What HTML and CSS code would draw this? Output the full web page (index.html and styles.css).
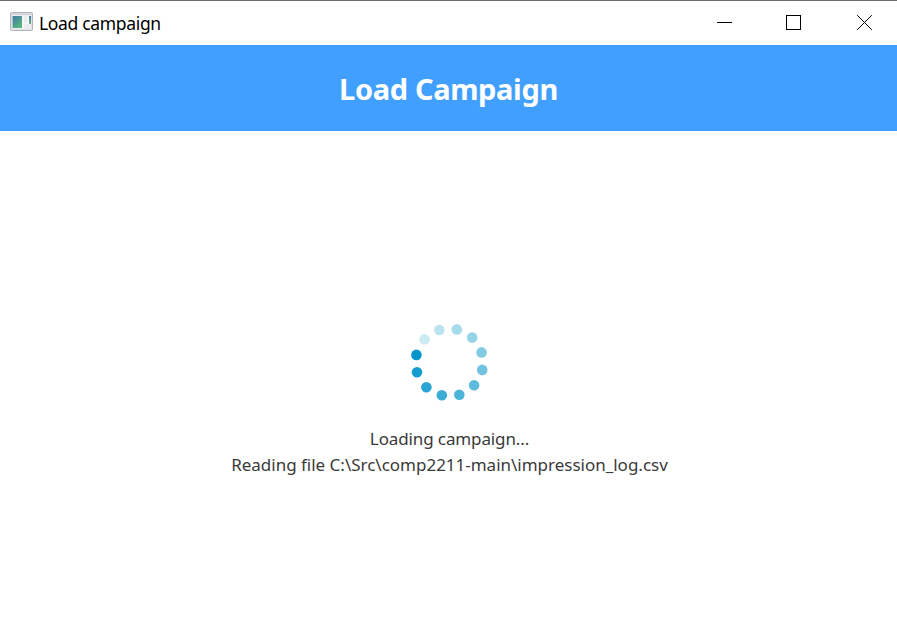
FILE: index.html
```html
<!DOCTYPE html>
<html lang="en">
<head>
<meta charset="utf-8">
<title>Load campaign</title>
<link rel="stylesheet" href="styles.css">
</head>
<body>
<div class="window">
  <div class="titlebar">
    <svg class="app-icon" width="24" height="20" viewBox="0 0 24 20">
      <defs>
        <linearGradient id="pane" x1="0" y1="0" x2=".7" y2="1"><stop offset="0" stop-color="#4279a6"/><stop offset="1" stop-color="#58b77f"/></linearGradient>
        <linearGradient id="side" x1="0" y1="0" x2="0" y2="1"><stop offset="0" stop-color="#4279b0"/><stop offset="1" stop-color="#67b98c"/></linearGradient>
      </defs>
      <rect x=".5" y=".5" width="22" height="18" rx="1" fill="#dfe2e5" stroke="#b2b6ba"/>
      <path d="M1 2h21" stroke="#d2d6dc" stroke-width="2"/>
      <path d="M2 3.5h19v13H2z" fill="#fafafa"/>
      <rect x="2.500" y="4" width="9.500" height="12" fill="url(#pane)"/>
      <rect x="13.500" y="4" width="4" height="7" fill="#ededed"/>
      <rect x="13.500" y="12" width="7" height="4" fill="#ededed"/>
      <rect x="19" y="4" width="2" height="8" fill="url(#side)"/>
    </svg>
    <span class="title">Load campaign</span>
    <svg class="controls" width="157" height="16" viewBox="0 0 157 16" fill="none" stroke="#000">
      <path d="M0 7.500h15"/>
      <rect x="69.500" y=".5" width="14" height="14"/>
      <path d="M140.200 .2l14.600 14.600M154.800 .2l-14.600 14.600"/>
    </svg>
  </div>
  <header class="banner"><h1 class="heading">Load Campaign</h1></header>
  <main class="content">
    <svg class="spinner" width="80" height="80" viewBox="409 322 80 80">
      <circle cx="424.500" cy="339.300" r="5.300" fill="#cbeaf4"/>
      <circle cx="439.300" cy="330" r="5.300" fill="#b9e3ef"/>
      <circle cx="456.800" cy="329.400" r="5.300" fill="#a7dbeb"/>
      <circle cx="472.200" cy="337.600" r="5.300" fill="#95d3e7"/>
      <circle cx="481.600" cy="352.400" r="5.300" fill="#83cbe3"/>
      <circle cx="482.200" cy="369.900" r="5.300" fill="#71c3df"/>
      <circle cx="474.100" cy="385.300" r="5.300" fill="#5fbbdc"/>
      <circle cx="459.300" cy="394.700" r="5.300" fill="#4cb4d9"/>
      <circle cx="441.800" cy="395.300" r="5.300" fill="#3aacd6"/>
      <circle cx="426.400" cy="387.200" r="5.300" fill="#28a5d2"/>
      <circle cx="417" cy="372.300" r="5.300" fill="#169dcf"/>
      <circle cx="416.400" cy="354.900" r="5.300" fill="#0496cb"/>
    </svg>
    <p class="status">Loading campaign...</p>
    <p class="status detail">Reading file C:\Src\comp2211-main\impression_log.csv</p>
  </main>
</div>
</body>
</html>
```

FILE: styles.css
```css
body {
  margin: 0;
  font-family: "Noto Sans", sans-serif;
  background: #fff;
}
.window {
  height: 644px;
  box-sizing: border-box;
  border-top: 1px solid #6b6b6b;
  display: flex;
  flex-direction: column;
  overflow: hidden;
}
.titlebar {
  height: 44px;
  display: flex;
  align-items: center;
  padding: 0 23px 0 10px;
}
.app-icon {
  margin-top: -2px;
  margin-right: 4px;
}
.title {
  flex: 1;
  font-size: 17.5px;
  line-height: 24px;
  letter-spacing: -0.33px;
  color: #000;
  padding-left: 1px;
}
.banner {
  height: 86px;
  background: #409fff;
  display: flex;
  justify-content: center;
  align-items: center;
}
.heading {
  margin: 0;
  padding-top: 2px;
  font-size: 29px;
  line-height: 40px;
  letter-spacing: -0.35px;
  font-weight: 700;
  color: #fff;
}
.content {
  flex: 1;
  display: flex;
  flex-direction: column;
  align-items: center;
  padding: 191px 0 0 2px;
}
.spinner {
  margin-bottom: 24px;
  margin-left: -2px;
}
.status {
  margin: 0;
  font-size: 17px;
  line-height: 26px;
  letter-spacing: -0.12px;
  color: #3a3a3a;
  white-space: nowrap;
}
.detail {
  letter-spacing: -0.01px;
}
```
